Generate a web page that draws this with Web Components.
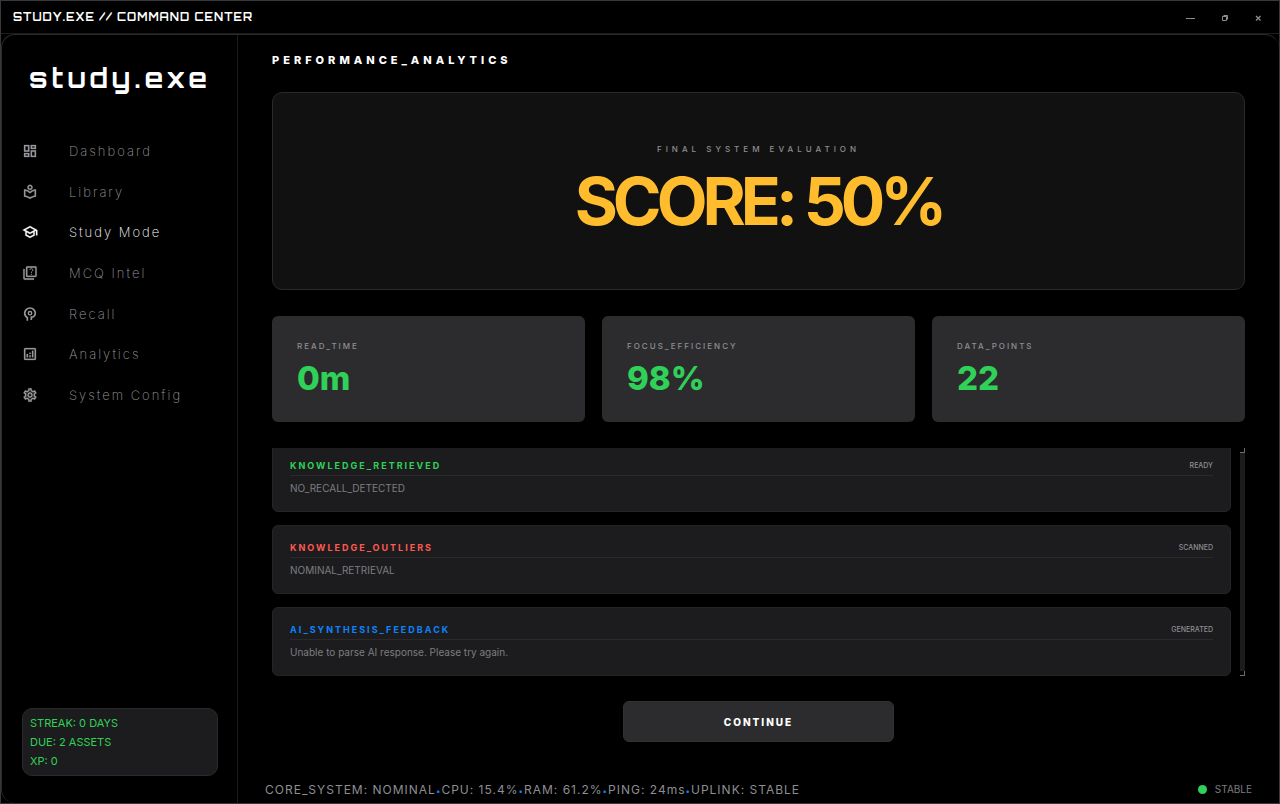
<!DOCTYPE html>
<html lang="en">
<head>
<meta charset="utf-8">
<title>study.exe</title>
<style>
  html, body {
    height: 100%;
    margin: 0;
    background: #000;
  }
  body {
    font-family: Inter, "Liberation Sans", sans-serif;
    color: #fff;
    --panel: #1c1c1e;
    --line: #2a2a2c;
    --muted: #8e8e93;
    --green: #30d158;
    --red: #ff5a50;
    --blue: #0a84ff;
    --display: Orbitron, "DejaVu Sans", sans-serif;
  }
</style>
</head>
<body>

<app-window>
  <title-bar slot="title">STUDY.EXE // COMMAND CENTER</title-bar>

  <side-bar slot="sidebar">
    <span slot="brand">study.exe</span>
    <nav-item icon="dashboard">Dashboard</nav-item>
    <nav-item icon="library">Library</nav-item>
    <nav-item icon="school" active>Study Mode</nav-item>
    <nav-item icon="quiz">MCQ Intel</nav-item>
    <nav-item icon="recall">Recall</nav-item>
    <nav-item icon="analytics">Analytics</nav-item>
    <nav-item icon="settings">System Config</nav-item>
    <user-stats slot="stats">
      <div>STREAK: 0 DAYS</div>
      <div>DUE: 2 ASSETS</div>
      <div>XP: 0</div>
    </user-stats>
  </side-bar>

  <analytics-page>
    <span slot="heading">PERFORMANCE_ANALYTICS</span>
    <score-panel slot="score">
      <span slot="label">FINAL SYSTEM EVALUATION</span>
      SCORE: 50%
    </score-panel>
    <stat-card slot="stat"><span slot="label">READ_TIME</span>0m</stat-card>
    <stat-card slot="stat"><span slot="label">FOCUS_EFFICIENCY</span>98%</stat-card>
    <stat-card slot="stat"><span slot="label">DATA_POINTS</span>22</stat-card>
    <log-list slot="logs">
      <log-card style="--accent: var(--green)">
        <span slot="title">KNOWLEDGE_RETRIEVED</span>
        <span slot="tag">READY</span>
        NO_RECALL_DETECTED
      </log-card>
      <log-card style="--accent: var(--red)">
        <span slot="title">KNOWLEDGE_OUTLIERS</span>
        <span slot="tag">SCANNED</span>
        NOMINAL_RETRIEVAL
      </log-card>
      <log-card style="--accent: var(--blue)">
        <span slot="title">AI_SYNTHESIS_FEEDBACK</span>
        <span slot="tag">GENERATED</span>
        Unable to parse AI response. Please try again.
      </log-card>
    </log-list>
    <action-button slot="action">CONTINUE</action-button>
  </analytics-page>

  <status-bar slot="status">
    <span>CORE_SYSTEM: NOMINAL</span>
    <span>CPU: 15.4%</span>
    <span>RAM: 61.2%</span>
    <span>PING: 24ms</span>
    <span>UPLINK: STABLE</span>
    <span slot="state">STABLE</span>
  </status-bar>
</app-window>

<script>
  // Registers an element whose shadow root is cloned from the given markup
  function define(name, html, setup) {
    const template = document.createElement('template');
    template.innerHTML = html;
    customElements.define(name, class extends HTMLElement {
      constructor() {
        super();
        const shadow = this.attachShadow({ mode: 'open' });
        shadow.appendChild(template.content.cloneNode(true));
        if (setup) setup(this, shadow);
      }
    });
  }

  const ICONS = {
    dashboard: '<path d="M19 5v2h-4V5h4M9 5v6H5V5h4m10 8v6h-4v-6h4M9 17v2H5v-2h4M21 3h-8v6h8V3zM11 3H3v10h8V3zm10 8h-8v10h8V11zm-10 4H3v6h8v-6z"/>',
    library: '<path d="M16 5c0-2.21-1.79-4-4-4S8 2.79 8 5s1.79 4 4 4 4-1.79 4-4zm-6 0c0-1.1.9-2 2-2s2 .9 2 2-.9 2-2 2-2-.9-2-2zM12 11.55C9.64 9.35 6.48 8 3 8v11c3.48 0 6.64 1.35 9 3.55 2.36-2.19 5.52-3.55 9-3.55V8c-3.48 0-6.64 1.35-9 3.55zm7 5.58c-2.53.34-4.93 1.3-7 2.82-2.06-1.52-4.47-2.49-7-2.83v-6.95c2.1.38 4.05 1.35 5.64 2.83L12 14.28l1.36-1.27c1.59-1.48 3.54-2.45 5.64-2.83v6.95z"/>',
    school: '<path d="M12 3L1 9l4 2.18v6L12 21l7-3.82v-6l2-1.09V17h2V9L12 3zm6.82 6L12 12.72 5.18 9 12 5.28 18.82 9zM17 15.99l-5 2.73-5-2.73v-3.72L12 15l5-2.73v3.72z"/>',
    quiz: '<path d="M4 6H2v14c0 1.1.9 2 2 2h14v-2H4V6zM20 2H8c-1.1 0-2 .9-2 2v12c0 1.1.9 2 2 2h12c1.1 0 2-.9 2-2V4c0-1.1-.9-2-2-2zm0 14H8V4h12v12z"/><path d="M11.8 7.6a2.2 2.2 0 1 1 3.6 1.7c-.9.8-1.4 1.1-1.4 2.5M14 13.2v1.6" fill="none" stroke-width="1.5"/>',
    recall: '<path d="M8 22v-4.500C5.500 16 4 13.800 4 11a8 8 0 0 1 16 0c0 2.800-1.500 4.500-3.500 5.500H14V21" fill="none" stroke-width="2.500"/><circle cx="12" cy="10.800" r="2.600" fill="none" stroke-width="2"/>',
    analytics: '<path d="M19 3H5c-1.1 0-2 .9-2 2v14c0 1.1.9 2 2 2h14c1.1 0 2-.9 2-2V5c0-1.1-.9-2-2-2zm0 16H5V5h14v14zM7 12h2v5H7zM15 7h2v10h-2zM11 14h2v3h-2zM11 10h2v2h-2z"/>',
    settings: '<path d="M19.43 12.98c.04-.32.07-.64.07-.98 0-.34-.03-.66-.07-.98l2.11-1.65c.19-.15.24-.42.12-.64l-2-3.46c-.09-.16-.26-.25-.44-.25-.06 0-.12.01-.17.03l-2.49 1c-.52-.4-1.08-.73-1.69-.98l-.38-2.65C14.46 2.18 14.25 2 14 2h-4c-.25 0-.46.18-.49.42l-.38 2.65c-.61.25-1.17.59-1.69.98l-2.49-1c-.06-.02-.12-.03-.18-.03-.17 0-.34.09-.43.25l-2 3.46c-.13.22-.07.49.12.64l2.11 1.65c-.04.32-.07.65-.07.98 0 .33.03.66.07.98l-2.11 1.65c-.19.15-.24.42-.12.64l2 3.46c.09.16.26.25.44.25.06 0 .12-.01.17-.03l2.49-1c.52.4 1.08.73 1.69.98l.38 2.65c.03.24.24.42.49.42h4c.25 0 .46-.18.49-.42l.38-2.65c.61-.25 1.17-.59 1.69-.98l2.49 1c.06.02.12.03.18.03.17 0 .34-.09.43-.25l2-3.46c.12-.22.07-.49-.12-.64l-2.11-1.65zm-1.98-1.71c.04.31.05.52.05.73 0 .21-.02.43-.05.73l-.14 1.13.89.7 1.08.84-.7 1.21-1.27-.51-1.04-.42-.9.68c-.43.32-.84.56-1.25.73l-1.06.43-.16 1.13-.2 1.35h-1.4l-.19-1.35-.16-1.13-1.06-.43c-.43-.18-.83-.41-1.23-.71l-.91-.7-1.06.43-1.27.51-.7-1.21 1.08-.84.89-.7-.14-1.13c-.03-.31-.05-.54-.05-.74s.02-.43.05-.73l.14-1.13-.89-.7-1.08-.84.7-1.21 1.27.51 1.04.42.9-.68c.43-.32.84-.56 1.25-.73l1.06-.43.16-1.13.2-1.35h1.39l.19 1.35.16 1.13 1.06.43c.43.18.83.41 1.23.71l.91.7 1.06-.43 1.27-.51.7 1.21-1.07.85-.89.7.14 1.13zM12 8c-2.21 0-4 1.79-4 4s1.79 4 4 4 4-1.79 4-4-1.79-4-4-4zm0 6c-1.1 0-2-.9-2-2s.9-2 2-2 2 .9 2 2-.9 2-2 2z" fill-rule="evenodd"/>'
  };

  define('app-window', `
    <style>
      :host {
        display: flex;
        flex-direction: column;
        box-sizing: border-box;
        min-height: 100vh;
        border: 1px solid #38383a;
        background: #000;
      }
      .body {
        flex: 1;
        display: grid;
        grid-template-columns: 235px minmax(0, 1fr);
        border: 1px solid #2a2a2c;
        border-width: 1px 0 0 1px;
        border-radius: 14px;
      }
      main {
        display: flex;
        flex-direction: column;
        border-left: 1px solid #1a1a1b;
      }
    </style>
    <slot name="title"></slot>
    <div class="body">
      <slot name="sidebar"></slot>
      <main>
        <slot></slot>
        <slot name="status"></slot>
      </main>
    </div>
  `);

  define('title-bar', `
    <style>
      :host {
        display: flex;
        align-items: center;
        justify-content: space-between;
        height: 32px;
        padding: 0 4px 0 12px;
        border-bottom: 1px solid #1c1c1e;
        font: 700 11px/15px var(--display);
        letter-spacing: 1px;
      }
      .controls {
        display: flex;
      }
      button {
        display: grid;
        place-items: center;
        width: 34px;
        height: 32px;
        padding: 0;
        border: 0;
        background: none;
        color: #8e8e93;
      }
      svg {
        width: 10px;
        height: 10px;
        fill: none;
        stroke: currentColor;
      }
    </style>
    <span><slot></slot></span>
    <div class="controls">
      <button aria-label="Minimize"><svg viewBox="0 0 10 10"><path d="M1 6.500h9"/></svg></button>
      <button aria-label="Maximize"><svg viewBox="0 0 10 10"><path d="M3.500 4.500h4v4h-4zM4.500 3.500h4v4"/></svg></button>
      <button aria-label="Close"><svg viewBox="0 0 10 10"><path d="M3 4l4.500 4.500M7.500 4L3 8.500" stroke-width="1.300"/></svg></button>
    </div>
  `);

  define('side-bar', `
    <style>
      :host {
        display: flex;
        flex-direction: column;
        padding: 27px 19px 27px 20px;
      }
      .brand {
        font: 700 27px/32px var(--display);
        letter-spacing: 4px;
        text-align: center;
        white-space: nowrap;
      }
      nav {
        display: grid;
        grid-auto-rows: 1fr;
        min-height: 284px;
        margin-top: 37px;
      }
      .stats {
        margin-top: auto;
      }
    </style>
    <div class="brand"><slot name="brand"></slot></div>
    <nav><slot></slot></nav>
    <div class="stats"><slot name="stats"></slot></div>
  `);

  define('nav-item', `
    <style>
      :host {
        display: block;
        color: #98989d;
      }
      :host([active]) {
        color: #fff;
      }
      a {
        display: flex;
        align-items: center;
        gap: 31px;
        height: 100%;
        color: inherit;
        text-decoration: none;
        font-size: 13px;
        font-weight: 200;
        letter-spacing: 2px;
      }
      svg {
        width: 16px;
        height: 16px;
        fill: currentColor;
        stroke: currentColor;
        stroke-width: 0.4;
      }
    </style>
    <a href="#"><svg viewBox="0 0 24 24" aria-hidden="true"></svg><slot></slot></a>
  `, (host, shadow) => {
    shadow.querySelector('svg').innerHTML = ICONS[host.getAttribute('icon')] || '';
  });

  define('user-stats', `
    <style>
      :host {
        display: block;
        padding: 5px 7px 4px;
        border: 1px solid var(--line);
        border-radius: 10px;
        background: var(--panel);
        color: var(--green);
        font-size: 11px;
        line-height: 19px;
      }
    </style>
    <slot></slot>
  `);

  define('analytics-page', `
    <style>
      :host {
        flex: 1;
        display: flex;
        flex-direction: column;
        padding: 17px 34px 0;
      }
      h1 {
        margin: 0 0 24px;
        font-size: 11px;
        line-height: 16px;
        font-weight: 800;
        letter-spacing: 4px;
      }
      .stats {
        display: grid;
        grid-template-columns: repeat(3, 1fr);
        gap: 17px;
        margin: 26px 0;
      }
      .action {
        display: flex;
        justify-content: center;
        margin-top: 25px;
      }
    </style>
    <h1><slot name="heading"></slot></h1>
    <slot name="score"></slot>
    <div class="stats"><slot name="stat"></slot></div>
    <slot name="logs"></slot>
    <div class="action"><slot name="action"></slot></div>
  `);

  define('score-panel', `
    <style>
      :host {
        display: block;
        padding: 48px 24px;
        border: 1px solid var(--line);
        border-radius: 10px;
        background: #111;
        text-align: center;
      }
      .label {
        color: var(--muted);
        font-size: 8px;
        line-height: 16px;
        font-weight: 500;
        letter-spacing: 4px;
      }
      .value {
        padding-top: 4px;
        color: #ffbd2e;
        font-size: 66px;
        line-height: 80px;
        font-weight: 700;
        letter-spacing: -5px;
      }
    </style>
    <div class="label"><slot name="label"></slot></div>
    <div class="value"><slot></slot></div>
  `);

  define('stat-card', `
    <style>
      :host {
        display: block;
        padding: 22px 25px 24px;
        border-radius: 6px;
        background: #2c2c2e;
      }
      .label {
        color: var(--muted);
        font-size: 8px;
        line-height: 16px;
        font-weight: 500;
        letter-spacing: 2px;
      }
      .value {
        padding-top: 4px;
        color: var(--green);
        font-size: 33px;
        line-height: 40px;
        font-weight: 800;
      }
    </style>
    <div class="label"><slot name="label"></slot></div>
    <div class="value"><slot></slot></div>
  `);

  // column-reverse keeps the list scrolled to its latest entry
  define('log-list', `
    <style>
      :host {
        display: flex;
        gap: 9px;
        height: 228px;
      }
      .view {
        flex: 1;
        display: flex;
        flex-direction: column-reverse;
        overflow-y: auto;
        scrollbar-width: none;
      }
      .items {
        display: grid;
        gap: 13px;
      }
      .track {
        display: flex;
        flex-direction: column;
        justify-content: space-between;
        width: 5px;
        background: #1c1c1e;
      }
      .track i {
        box-sizing: border-box;
        height: 5px;
        border: 1px solid #6c6c70;
        border-width: 0 1px 1px 0;
        background: #000;
      }
    </style>
    <div class="view"><div class="items"><slot></slot></div></div>
    <div class="track"><i></i><i></i></div>
  `);

  define('log-card', `
    <style>
      :host {
        display: block;
        padding: 13px 17px 15px;
        border: 1px solid #252527;
        border-radius: 6px;
        background: var(--panel);
        color: #7c7c80;
        font-size: 10px;
        line-height: 16px;
      }
      header {
        display: flex;
        justify-content: space-between;
        margin-bottom: 4px;
        padding-bottom: 1px;
        border-bottom: 1px solid var(--line);
        line-height: 17px;
      }
      .title {
        color: var(--accent);
        font-size: 9px;
        font-weight: 700;
        letter-spacing: 2px;
      }
      .tag {
        color: var(--muted);
        font-size: 7px;
        font-weight: 500;
      }
    </style>
    <header>
      <span class="title"><slot name="title"></slot></span>
      <span class="tag"><slot name="tag"></slot></span>
    </header>
    <slot></slot>
  `);

  define('action-button', `
    <style>
      :host {
        display: block;
      }
      button {
        min-width: 271px;
        height: 41px;
        border: 1px solid #323234;
        border-radius: 6px;
        background: #2c2c2e;
        color: #fff;
        font: inherit;
        font-size: 10px;
        font-weight: 800;
        letter-spacing: 2px;
      }
    </style>
    <button type="button"><slot></slot></button>
  `);

  define('status-bar', `
    <style>
      :host {
        display: flex;
        align-items: center;
        justify-content: space-between;
        height: 28px;
        padding: 0 27px;
        color: var(--muted);
        font-size: 12px;
      }
      .metrics {
        display: flex;
        letter-spacing: 1px;
      }
      ::slotted(span:not([slot]):not(:first-child))::before {
        content: "•";
        color: var(--blue);
        font-size: 8px;
      }
      .state {
        display: flex;
        align-items: center;
        gap: 8px;
        color: #7c7c80;
        font-size: 10px;
      }
      .dot {
        width: 9px;
        height: 9px;
        border-radius: 50%;
        background: var(--green);
      }
    </style>
    <div class="metrics"><slot></slot></div>
    <div class="state"><span class="dot"></span><slot name="state"></slot></div>
  `);
</script>
</body>
</html>
